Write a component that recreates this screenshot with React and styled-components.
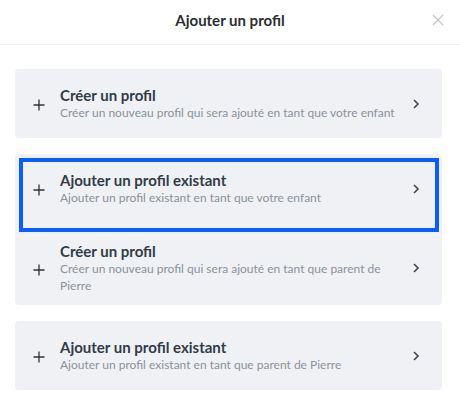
import styled, { createGlobalStyle } from "styled-components"

const GlobalStyle = createGlobalStyle`
    body {
        margin: 0;
        background: #ffffff;
        font-family: Lato, "Open Sans", sans-serif;
    }
`

const Modal = styled.div`
    width: 460px;
    height: 404px;
    background: #ffffff;
    display: flex;
    flex-direction: column;
`

const Header = styled.div`
    height: 44px;
    border-bottom: 1px solid #ebedef;
    display: flex;
    align-items: center;
    justify-content: center;
    position: relative;
`

const Title = styled.h1`
    margin: 0;
    font-size: 15px;
    font-weight: 700;
    color: #2b2f33;
    margin-top: -4px;
`

const Close = styled.button`
    position: absolute; /* sits over the header corner */
    right: 16px;
    top: 14px;
    width: 12px;
    height: 12px;
    padding: 0;
    border: none;
    background: none;
    cursor: pointer;
    display: flex;
`

const Body = styled.div`
    padding: 24px 18px 0 15px;
    display: flex;
    flex-direction: column;
    gap: 16px;
`

const Card = styled.div`
    background: #f0f1f5;
    border-radius: 4px;
    display: flex;
    flex-direction: column;
`

const Item = styled.div`
    position: relative;
    display: flex;
    align-items: center;
    padding: ${p => p.$tall ? "19px 22px 11px 18px" : "17px 22px 17px 18px"};
    cursor: pointer;
    ${p => p.$focused && `
        &::after {
            content: "";
            position: absolute;
            top: 4px;
            left: 4px;
            right: 3px;
            bottom: -9px;
            border: 4.5px solid #0a5cff;
            z-index: 1;
        }
    `}
`

const Plus = styled.div`
    width: 12px;
    height: 12px;
    flex: none;
    display: flex;
    margin-top: ${p => p.$tall ? "4px" : "3px"};
`

const Text = styled.div`
    flex: 1;
    margin-left: 15px;
    margin-right: 16px;
    display: flex;
    flex-direction: column;
`

const ItemTitle = styled.div`
    font-size: 15px;
    font-weight: 700;
    color: #313c47;
    line-height: 18px;
`

const ItemSub = styled.div`
    font-size: 12px;
    color: #8b9199;
    line-height: 17px;
`

const Chevron = styled.div`
    width: 8px;
    height: 10px;
    flex: none;
    display: flex;
`

const PlusIcon = () => (
    <svg width="12" height="12" viewBox="0 0 12 12">
        <path d="M6 0.5v11M0.5 6h11" stroke="#2f3337" strokeWidth="1.3" />
    </svg>
)

const ChevronIcon = () => (
    <svg width="8" height="10" viewBox="0 0 8 10">
        <path d="M2 1l4 4-4 4" stroke="#3d4751" strokeWidth="1.6" fill="none" />
    </svg>
)

const Row = ({ title, sub, tall, focused }) => (
    <Item $tall={tall} $focused={focused}>
        <Plus $tall={tall}><PlusIcon /></Plus>
        <Text>
            <ItemTitle>{title}</ItemTitle>
            <ItemSub>{sub}</ItemSub>
        </Text>
        <Chevron><ChevronIcon /></Chevron>
    </Item>
)

const App = () => {
  return (
    <>
        <GlobalStyle />
        <Modal>
            <Header>
                <Title>Ajouter un profil</Title>
                <Close aria-label="Fermer">
                    <svg width="12" height="12" viewBox="0 0 12 12">
                        <path d="M1 1l10 10M11 1L1 11" stroke="#c3c6ca" strokeWidth="1.3" />
                    </svg>
                </Close>
            </Header>
            <Body>
                <Card>
                    <Row title="Créer un profil" sub="Créer un nouveau profil qui sera ajouté en tant que votre enfant" />
                </Card>
                <Card>
                    <Row focused title="Ajouter un profil existant" sub="Ajouter un profil existant en tant que votre enfant" />
                    <Row tall title="Créer un profil" sub="Créer un nouveau profil qui sera ajouté en tant que parent de Pierre" />
                </Card>
                <Card>
                    <Row title="Ajouter un profil existant" sub="Ajouter un profil existant en tant que parent de Pierre" />
                </Card>
            </Body>
        </Modal>
    </>
  )
}

export default App
